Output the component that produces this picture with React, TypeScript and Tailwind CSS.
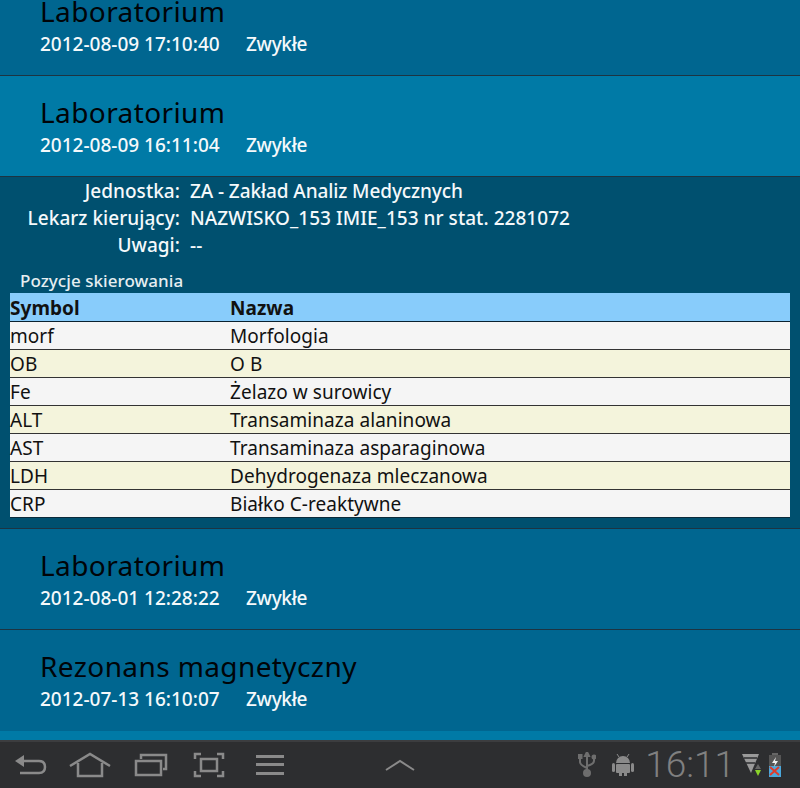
const F = '[font-family:"Noto_Sans","Open_Sans",sans-serif]';

function Row({ title, date, bright, first, last }: { title: string; date: string; bright?: boolean; first?: boolean; last?: boolean }) {
  return (
    <div className={`${first ? "-mt-[25px]" : ""} h-[101px] pl-10 pt-[21px] shrink-0 border-b ${last ? "border-transparent" : "border-[#1d3442]"} ${bright ? "bg-[#007aa6]" : "bg-[#006690]"}`}>
      <div className="text-[28px] tracking-[0.4px] leading-[30px] text-[#000408]">{title}</div>
      <div className="mt-[6px] flex text-[19px] font-medium leading-[24px] text-[#f5f9fb]">
        <span className="w-[206px]">{date}</span>
        <span className="tracking-[-0.3px]">Zwykłe</span>
      </div>
    </div>
  );
}

const items = [
  ["morf", "Morfologia"],
  ["OB", "O B"],
  ["Fe", "Żelazo w surowicy"],
  ["ALT", "Transaminaza alaninowa"],
  ["AST", "Transaminaza asparaginowa"],
  ["LDH", "Dehydrogenaza mleczanowa"],
  ["CRP", "Białko C-reaktywne"],
];

const G = "#8a8a8a";

export default function App() {
  return (
    <div className={`w-[800px] h-[788px] overflow-hidden flex flex-col bg-[#006690] ${F}`}>
      <Row first title="Laboratorium" date="2012-08-09 17:10:40" />
      <Row bright title="Laboratorium" date="2012-08-09 16:11:04" />
      <div className="h-[352px] shrink-0 bg-[#00506f] border-b border-[#1d3442] pt-[1px] text-[19px] text-[#f5f9fb]">
        <div className="grid grid-cols-[180px_1fr] gap-x-[10px] leading-[27px] font-medium tracking-[0.04px]">
          <span className="text-right">Jednostka:</span>
          <span className="tracking-[-0.1px]">ZA - Zakład Analiz Medycznych</span>
          <span className="text-right">Lekarz kierujący:</span>
          <span>NAZWISKO_153 IMIE_153 nr stat. 2281072</span>
          <span className="text-right">Uwagi:</span>
          <span>--</span>
        </div>
        <div className="mt-[10px] pl-5 text-[17px] font-medium tracking-[0.05px] leading-[24px] text-[#e6eef1]">Pozycje skierowania</div>
        <div className="mx-[10px] text-[19px] tracking-[0.05px] leading-[27px] text-[#111]">
          <div className="flex h-[29px] pt-[2px] bg-[#88ccfb] border-b border-[#0a2230] font-bold">
            <span className="w-[220px]">Symbol</span>
            <span>Nazwa</span>
          </div>
          {items.map(([s, n], i) => (
            <div key={s} className={`flex h-[28px] pt-[1px] border-b ${i === 6 ? "border-[#0a2a3a]" : "border-[#333]"} ${i % 2 ? "bg-[#f4f4dc]" : "bg-[#f5f5f5]"}`}>
              <span className="w-[220px]">{s}</span>
              <span>{n}</span>
            </div>
          ))}
        </div>
      </div>
      <Row title="Laboratorium" date="2012-08-01 12:28:22" />
      <Row last title="Rezonans magnetyczny" date="2012-07-13 16:10:07" />
      <div className="flex-1 bg-[#007aa6]" />
      <div className="h-[48px] shrink-0 bg-[#2d2e30] border-t-2 border-[#3c3d3f] flex items-center pl-[14px] pr-[19px]">
        <svg width="34" height="26" viewBox="0 0 34 26" fill="none" stroke={G} strokeWidth="2.5" className="mr-[21px]">
          <path d="M5 9h20q6 0 6 6v0q0 6-6 6H6" />
          <path d="M1 9l9-6v12z" fill={G} stroke="none" />
        </svg>
        <svg width="42" height="26" viewBox="0 0 42 26" fill="none" stroke={G} strokeWidth="2.5" className="mr-[23px]">
          <path d="M1 14L21 2l20 12" />
          <path d="M9 11v13h24V11" />
        </svg>
        <svg width="34" height="26" viewBox="0 0 34 26" fill="none" stroke={G} strokeWidth="2.5" className="mr-[25px]">
          <rect x="2" y="9" width="25" height="14" />
          <path d="M7 7V3h25v14h-3" />
        </svg>
        <svg width="32" height="26" viewBox="0 0 32 26" fill="none" stroke={G} strokeWidth="2.5" className="mr-[31px]">
          <rect x="8" y="7" width="16" height="12" />
          <path d="M8 2H2v5M24 2h6v5M2 19v5h6M30 19v5h-6" />
        </svg>
        <svg width="28" height="22" viewBox="0 0 28 22" fill={G} className="mr-[101px]">
          <rect y="1" width="28" height="3" />
          <rect y="9" width="28" height="3" />
          <rect y="18" width="28" height="3" />
        </svg>
        <svg width="30" height="14" viewBox="0 0 30 14" fill="none" stroke={G} strokeWidth="2">
          <path d="M1 12L15 3l14 9" />
        </svg>
        <div className="flex-1" />
        <svg width="18" height="26" viewBox="0 0 18 26" fill="none" stroke="#6e6e6e" strokeWidth="2" className="mr-[16px]">
          <path d="M9 3v18M2 6v4q0 3 7 6M16 6v3q0 3-7 5" />
          <circle cx="9" cy="21" r="3" fill="#6e6e6e" />
          <rect x="0.5" y="3" width="3" height="3" fill="#6e6e6e" />
          <path d="M9 0l-2 4h4z" fill="#6e6e6e" />
          <circle cx="16" cy="5" r="1.5" fill="#6e6e6e" />
        </svg>
        <svg width="22" height="24" viewBox="0 0 22 24" fill={G} className="mr-[11px]">
          <path d="M4 10a7 7 0 0 1 14 0z" />
          <path d="M7 4L5 1M15 4l2-3" stroke={G} />
          <rect x="4" y="11" width="14" height="9" rx="1" />
          <rect x="0" y="10" width="3" height="9" rx="1.5" />
          <rect x="19" y="10" width="3" height="9" rx="1.5" />
          <rect x="7" y="20" width="3" height="3" />
          <rect x="12" y="20" width="3" height="3" />
        </svg>
        <span className="text-[37px] leading-[40px] text-[#808080] font-['Roboto',sans-serif] font-light mr-[7px]">16:11</span>
        <svg width="20" height="26" viewBox="0 0 20 26" className="mr-[7px]">
          <path d="M0 2h17l-8 19z" fill="#9a9a9a" />
          <path d="M2 6h13M4 11h9" stroke="#2d2e30" strokeWidth="1.5" />
          <path d="M16 12l3 5h-6z" fill="#666" />
          <path d="M13 18h6l-3 6z" fill="#8bd32a" />
        </svg>
        <svg width="12" height="24" viewBox="0 0 12 24">
          <rect x="3" y="0" width="6" height="2" fill="#666" />
          <rect x="0" y="2" width="12" height="12" fill="#555" />
          <rect x="0" y="13" width="12" height="11" fill="#4aa8dc" />
          <path d="M7 4L3 10h3l-1 4 4-6H6z" fill="#eee" />
          <path d="M1 14l9 8M10 14l-9 8" stroke="#e03a2a" strokeWidth="2" />
        </svg>
      </div>
    </div>
  );
}
